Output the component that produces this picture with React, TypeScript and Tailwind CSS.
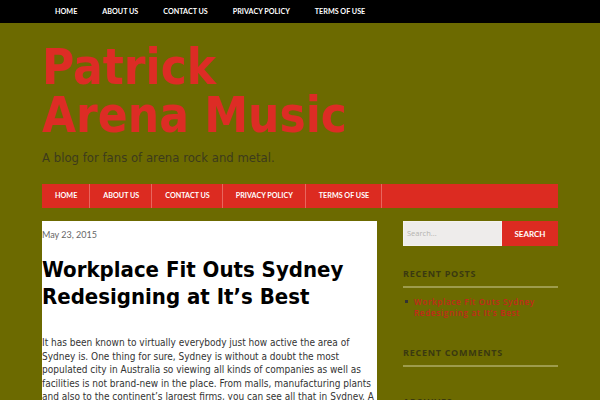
const topLinks = ["Home", "About Us", "Contact Us", "Privacy Policy", "Terms of Use"];

function TopBar() {
  return (
    <div className="h-[23px] bg-black">
      <ul className="ml-[42px] flex h-full items-center pl-[13px]">
        {topLinks.map((l) => (
          <li
            key={l}
            className="mr-[25px] font-['Lato',sans-serif] text-[7.2px] font-bold uppercase leading-none text-white"
          >
            {l}
          </li>
        ))}
      </ul>
    </div>
  );
}

function MainNav() {
  return (
    <nav className="mt-[17px] flex h-[24px] w-[516px] bg-[#dc2b21]">
      {topLinks.map((l) => (
        <div
          key={l}
          className="flex items-center border-r border-[#e8665e] pl-[13px] pr-[12px] font-['Lato',sans-serif] text-[7.2px] font-bold uppercase text-white"
        >
          {l}
        </div>
      ))}
    </nav>
  );
}

function SidebarHeading({ children }: { children: React.ReactNode }) {
  return (
    <h3 className="border-b-2 border-[#9e9c4c] pb-[5px] font-['Open_Sans',sans-serif] text-[9px] font-bold uppercase leading-[14px] tracking-[0.08em] text-[#3a3910]">
      {children}
    </h3>
  );
}

export default function App() {
  return (
    <div className="h-[400px] w-[600px] overflow-hidden bg-[#6c6a00]">
      <TopBar />
      <div className="ml-[42px] w-[516px]">
        <header className="pt-[21px]">
          <h1 className="font-['DejaVu_Sans_Condensed','DejaVu_Sans',sans-serif] text-[49px] font-bold leading-[48px] text-[#dd2c25]">
            Patrick
            <br />
            Arena Music
          </h1>
          <p className="mt-[9px] font-['DejaVu_Sans_Condensed','DejaVu_Sans',sans-serif] text-[13px] leading-[18px] text-[#3c3b1c]">
            A blog for fans of arena rock and metal.
          </p>
        </header>
        <MainNav />
        <div className="mt-[13px] flex gap-[26px]">
          <main className="h-[200px] w-[335px] bg-white pt-[7px]">
            <div className="font-['Lato',sans-serif] text-[9px] leading-[14px] text-[#666]">
              May 23, 2015
            </div>
            <h2 className="mt-[14px] font-['DejaVu_Sans_Condensed','DejaVu_Sans',sans-serif] text-[22px] font-bold leading-[27px] text-black">
              Workplace Fit Outs Sydney Redesigning at It’s Best
            </h2>
            <p className="mt-[26px] font-['DejaVu_Sans_Condensed','DejaVu_Sans',sans-serif] text-[10px] leading-[13.5px] text-[#333]">
              It has been known to virtually everybody just how active the area of
              Sydney is. One thing for sure, Sydney is without a doubt the most
              populated city in Australia so viewing all kinds of companies as well as
              facilities is not brand-new in the place. From malls, manufacturing plants
              and also to the continent’s largest firms, you can see all that in Sydney. A
              lot of these companies are expanding.
            </p>
          </main>
          <aside className="w-[155px]">
            <form className="flex h-[25px]">
              <div className="flex w-[99px] items-center border border-[#f4f2ef] bg-[#eeeceb] pl-[3px] font-['Open_Sans',sans-serif] text-[7.5px] text-[#b5b3b0]">
                Search...
              </div>
              <div className="flex flex-1 items-center justify-center bg-[#dc2b21] font-['Lato',sans-serif] text-[8px] font-bold uppercase text-white">
                Search
              </div>
            </form>
            <section className="mt-[21px]">
              <SidebarHeading>Recent Posts</SidebarHeading>
              <ul className="mt-[8px] flex gap-[6px] pl-[2px]">
                <li className="mt-[4px] h-[3px] w-[3px] shrink-0 bg-[#333]" />
                <li className="font-['Open_Sans',sans-serif] text-[8px] font-semibold leading-[11px] tracking-[0.09em] text-[#c4281b]">
                  Workplace Fit Outs Sydney
                  <br />
                  Redesigning at It’s Best
                </li>
              </ul>
            </section>
            <section className="mt-[28px]">
              <SidebarHeading>Recent Comments</SidebarHeading>
            </section>
            <section className="mt-[28px]">
              <SidebarHeading>Archives</SidebarHeading>
            </section>
          </aside>
        </div>
      </div>
    </div>
  );
}
